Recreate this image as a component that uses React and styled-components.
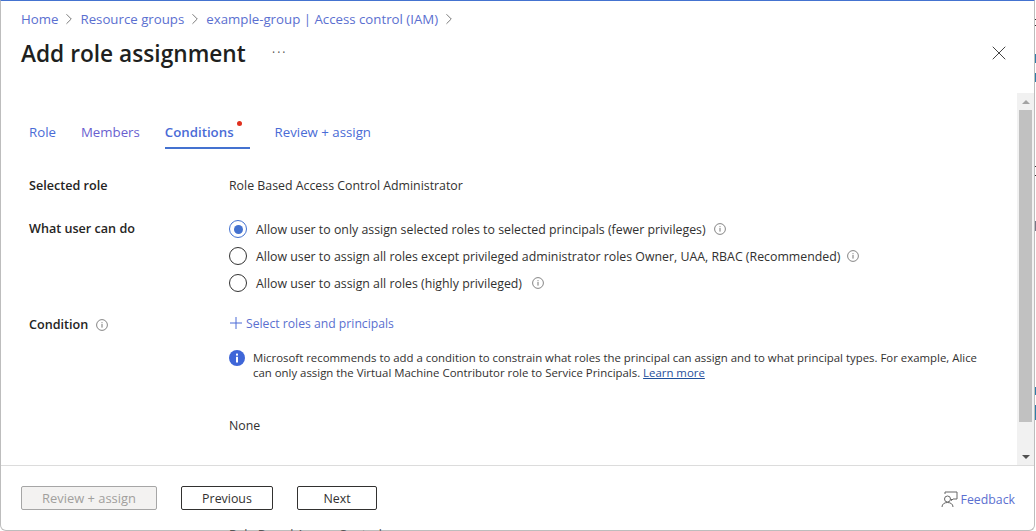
import React from 'react';
import styled, { createGlobalStyle } from 'styled-components';
import { ChevronRight, X } from 'lucide-react';

const GlobalStyle = createGlobalStyle`
  html, body {
    margin: 0;
    padding: 0;
    height: 531px;
    overflow: hidden;
    background: #fff;
    font-family: 'Open Sans', 'Noto Sans', sans-serif;
    font-size: 12.35px;
    color: #323130;
  }
`;

const Blade = styled.div`
  box-sizing: border-box;
  width: 1035px;
  height: 531px;
  display: flex;
  flex-direction: column;
  background: #fff;
  border-top: 1px solid #4473d0;
  border-left: 1px solid #bdbdbd;
  border-right: 1px solid #bdbdbd;
  border-bottom: 1px solid #bdbdbd;
  border-radius: 0 0 6px 6px;
`;

const Header = styled.div`
  height: 92px;
  flex: none;
  padding: 0 20px;
  display: flex;
  flex-direction: column;
`;

const Breadcrumb = styled.nav`
  display: flex;
  align-items: center;
  height: 18px;
  margin-top: 9px;
`;

const Crumb = styled.a`
  color: #5b6fd0;
  font-size: 13.25px;
`;

const CrumbSep = styled(ChevronRight)`
  width: 18px;
  height: 18px;
  margin: 0 2px;
  color: #777;
  stroke-width: 1.3;
`;

const TitleRow = styled.div`
  display: flex;
  align-items: center;
  margin-top: 7px;
  height: 36px;
`;

const Title = styled.h1`
  margin: 0;
  width: 251px;
  font-size: 22.7px;
  font-weight: 600;
  color: #201f1e;
  white-space: nowrap;
`;

const More = styled.span`
  color: #555;
  font-size: 12px;
  letter-spacing: 2px;
  line-height: 12px;
`;

const Close = styled(X)`
  width: 24px;
  height: 24px;
  margin-left: auto;
  margin-right: 3px;
  color: #444;
  stroke-width: 1;
`;

const BodyWrap = styled.div`
  flex: 1;
  min-height: 0;
  display: flex;
`;

const Body = styled.main`
  flex: 1;
  padding: 0 28px;
`;

const Tabs = styled.div`
  display: flex;
  gap: 25px;
  margin-top: 22px;
  height: 34px;
`;

const Tab = styled.div`
  position: relative;
  box-sizing: border-box;
  height: 34px;
  padding-top: 8px;
  padding-right: ${(p) => (p.$active ? '16px' : '0')};
  font-size: 13.25px;
  line-height: 18px;
  color: ${(p) => p.$color || '#4a6bd6'};
  font-weight: ${(p) => (p.$active ? 600 : 400)};
  border-bottom: 2px solid ${(p) => (p.$active ? '#4472d0' : 'transparent')};
`;

const Dot = styled.span`
  position: absolute;
  right: 8px;
  top: 6px;
  width: 5px;
  height: 5px;
  border-radius: 50%;
  background: #e0301e;
`;

const Row = styled.div`
  display: grid;
  grid-template-columns: 200px 1fr;
  margin-top: ${(p) => p.$top}px;
`;

const Label = styled.div`
  display: flex;
  align-items: flex-start;
  gap: 8px;
  font-size: 12.6px;
  font-weight: 600;
  color: #252423;
  line-height: 18px;
  padding-top: ${(p) => p.$pad || 0}px;
`;

const Value = styled.div`
  line-height: 18px;
  color: #323130;
`;

const RadioList = styled.div`
  display: flex;
  flex-direction: column;
  gap: 9px;
`;

const RadioRow = styled.div`
  display: flex;
  align-items: center;
  height: 18px;
`;

const Radio = styled.span`
  box-sizing: border-box;
  flex: none;
  width: 18px;
  height: 18px;
  margin-right: 9px;
  border-radius: 50%;
  border: 1.4px solid ${(p) => (p.$on ? '#4472d0' : '#333')};
  display: flex;
  align-items: center;
  justify-content: center;
  &::after {
    content: '';
    display: ${(p) => (p.$on ? 'block' : 'none')};
    width: 9px;
    height: 9px;
    border-radius: 50%;
    background: #4472d0;
  }
`;

const InfoWrap = styled.svg`
  flex: none;
  width: 12px;
  height: 12px;
  margin-left: ${(p) => p.$ml || 0}px;
  margin-top: ${(p) => p.$mt || 0}px;
`;

const Info = (props) => (
  <InfoWrap viewBox="0 0 12 12" {...props}>
    <circle cx="6" cy="6" r="5.4" fill="none" stroke="#777" strokeWidth="0.9" />
    <rect x="5.5" y="5" width="1" height="3.6" fill="#777" />
    <rect x="5.5" y="3.2" width="1" height="1" fill="#777" />
  </InfoWrap>
);

const AddLink = styled.a`
  display: flex;
  align-items: center;
  font-size: 12.2px;
  color: #5b6fd0;
  line-height: 18px;
`;

const PlusIcon = styled.svg`
  width: 12px;
  height: 12px;
  margin: -3px 4px 0 1px;
`;

const Notice = styled.div`
  display: flex;
  margin-top: 17px;
  gap: 8px;
  width: 750px;
`;

const NoticeIcon = styled.svg`
  flex: none;
  width: 16px;
  height: 16px;
`;

const NoticeText = styled.p`
  margin: 0;
  font-size: 11.4px;
  line-height: 15px;
  color: #323130;
`;

const LearnMore = styled.a`
  color: #1f4f9c;
  text-decoration: underline;
`;

const NoneText = styled.div`
  margin-top: 37px;
  line-height: 18px;
`;

const Scrollbar = styled.div`
  flex: none;
  width: 17px;
  background: #f1f1f1;
  display: flex;
  flex-direction: column;
  align-items: center;
`;

const ScrollArrow = styled.div`
  flex: none;
  height: 17px;
  display: flex;
  align-items: center;
  justify-content: center;
  &::after {
    content: '';
    border-left: 4px solid transparent;
    border-right: 4px solid transparent;
    ${(p) => (p.$up ? 'border-bottom: 4px solid #a3a3a3;' : 'border-top: 4px solid #505050;')}
  }
`;

const ScrollThumb = styled.div`
  width: 13px;
  height: 312px;
  background: #c1c1c1;
`;

const ScrollSpace = styled.div`
  flex: 1;
`;

const Footer = styled.footer`
  flex: none;
  height: 65px;
  box-sizing: border-box;
  border-top: 1px solid #dcdcdc;
  padding: 20px 20px 0;
  display: flex;
  align-items: flex-start;
  gap: 24px;
`;

const Button = styled.button`
  box-sizing: border-box;
  width: ${(p) => p.$w}px;
  height: 24px;
  padding: 0;
  border-radius: 2px;
  border: 1px solid ${(p) => (p.disabled ? '#a6a6a6' : '#323130')};
  background: ${(p) => (p.disabled ? '#f3f2f1' : '#fff')};
  color: ${(p) => (p.disabled ? '#a19f9d' : '#323130')};
  font-family: inherit;
  font-size: ${(p) => (p.disabled ? '12.9px' : '12.4px')};
  font-weight: 500;
`;

const Feedback = styled.a`
  margin-left: auto;
  margin-right: -1px;
  display: flex;
  align-items: center;
  gap: 3px;
  height: 26px;
  font-size: 12.3px;
  color: #5b6fd0;
`;

const FeedbackIcon = styled.svg`
  width: 17px;
  height: 17px;
`;

// page behind the blade, only a row of pixels of it shows
const Under = styled.div`
  position: absolute;
  left: 229px;
  top: 528px;
  font-size: 12.5px;
  line-height: 14px;
  color: #555;
  z-index: 1;
`;

const EdgeMarks = styled.div`
  position: absolute;
  top: 0;
  right: 0;
  width: 1px;
  height: 500px;
  background: linear-gradient(
    #fff 19px, #333 19px, #333 20px, #fff 20px,
    #fff 25px, #333 25px, #333 26px, #fff 26px,
    #fff 54px, #2f7fa8 54px, #2f7fa8 63px, #fff 63px,
    #fff 73px, #2f7fa8 73px, #2f7fa8 82px, #fff 82px,
    #fff 166px, #333 166px, #333 167px, #fff 167px,
    #fff 175px, #333 175px, #333 176px, #fff 176px,
    #fff 221px, #778 221px, #778 231px, #fff 231px,
    #fff 387px, #2f7fa8 387px, #2f7fa8 395px, #fff 395px,
    #fff 405px, #2f7fa8 405px, #2f7fa8 420px, #fff 420px
  );
`;

export default function App() {
  return (
    <>
      <GlobalStyle />
      <EdgeMarks />
      <Under>Role Based Access Control</Under>
      <Blade>
        <Header>
          <Breadcrumb>
            <Crumb>Home</Crumb>
            <CrumbSep />
            <Crumb>Resource groups</Crumb>
            <CrumbSep />
            <Crumb>example-group | Access control (IAM)</Crumb>
            <CrumbSep />
          </Breadcrumb>
          <TitleRow>
            <Title>Add role assignment</Title>
            <More>···</More>
            <Close />
          </TitleRow>
        </Header>
        <BodyWrap>
          <Body>
            <Tabs>
              <Tab>Role</Tab>
              <Tab $color="#6a5fd0">Members</Tab>
              <Tab $active>
                Conditions
                <Dot />
              </Tab>
              <Tab>Review + assign</Tab>
            </Tabs>
            <Row $top={28}>
              <Label>Selected role</Label>
              <Value>Role Based Access Control Administrator</Value>
            </Row>
            <Row $top={25}>
              <Label>What user can do</Label>
              <RadioList>
                <RadioRow>
                  <Radio $on />
                  Allow user to only assign selected roles to selected principals (fewer privileges)
                  <Info $ml={8} />
                </RadioRow>
                <RadioRow>
                  <Radio />
                  Allow user to assign all roles except privileged administrator roles Owner, UAA, RBAC (Recommended)
                  <Info $ml={7} />
                </RadioRow>
                <RadioRow>
                  <Radio />
                  Allow user to assign all roles (highly privileged)
                  <Info $ml={10} />
                </RadioRow>
              </RadioList>
            </Row>
            <Row $top={23}>
              <Label $pad={1}>
                Condition
                <Info $mt={3} />
              </Label>
              <div>
                <AddLink>
                  <PlusIcon viewBox="0 0 12 12">
                    <path d="M6 0v12M0 6h12" stroke="#4a6bd6" strokeWidth="1" fill="none" />
                  </PlusIcon>
                  Select roles and principals
                </AddLink>
                <Notice>
                  <NoticeIcon viewBox="0 0 16 16">
                    <circle cx="8" cy="8" r="8" fill="#3f66d8" />
                    <rect x="7" y="6.8" width="2" height="5.7" fill="#fff" />
                    <rect x="7" y="3.6" width="2" height="2" fill="#fff" />
                  </NoticeIcon>
                  <NoticeText>
                    Microsoft recommends to add a condition to constrain what roles the principal can assign and to what principal types. For example, Alice
                    <br />
                    can only assign the Virtual Machine Contributor role to Service Principals. <LearnMore>Learn more</LearnMore>
                  </NoticeText>
                </Notice>
                <NoneText>None</NoneText>
              </div>
            </Row>
          </Body>
          <Scrollbar>
            <ScrollArrow $up />
            <ScrollThumb />
            <ScrollSpace />
            <ScrollArrow />
          </Scrollbar>
        </BodyWrap>
        <Footer>
          <Button disabled $w={136}>Review + assign</Button>
          <Button $w={92}>Previous</Button>
          <Button $w={80}>Next</Button>
          <Feedback>
            <FeedbackIcon viewBox="0 0 17 17" fill="none" stroke="#666" strokeWidth="1">
              <path d="M4 3V1h12v7h-4l-1.5 1.5V8" />
              <circle cx="6.5" cy="8" r="3" />
              <path d="M1 16c0-3 2.5-4.5 5.5-4.5S12 13 12 16" />
            </FeedbackIcon>
            Feedback
          </Feedback>
        </Footer>
      </Blade>
    </>
  );
}
